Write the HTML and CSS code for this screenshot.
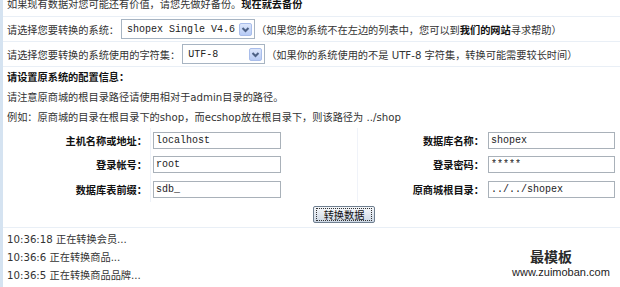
FILE: index.html
```html
<!DOCTYPE html>
<html lang="zh-CN">
<head>
    <meta charset="UTF-8">
    <meta name="viewport" content="width=device-width, initial-scale=1.0">
    <title>数据转换</title>
    <link rel="stylesheet" href="styles.css">
</head>
<body>

    <div class="page">
        <div class="row row-top">如果现有数据对您可能还有价值，请您先做好备份。<b>现在就去备份</b></div>

        <div class="row">
            <span>请选择您要转换的系统：</span>
            <span class="select select-system">
                <span class="select-value">shopex Single V4.6</span>
                <span class="select-btn"><svg width="11" height="11" viewBox="0 0 11 11"><path d="M2.5 4 L5.5 7 L8.5 4" fill="none" stroke="#4d6185" stroke-width="2"/></svg></span>
            </span>
            <span class="note">（如果您的系统不在左边的列表中，您可以到<b>我们的网站</b>寻求帮助）</span>
        </div>

        <div class="row">
            <span>请选择您要转换的系统使用的字符集：</span>
            <span class="select select-charset">
                <span class="select-value">UTF-8</span>
                <span class="select-btn"><svg width="11" height="11" viewBox="0 0 11 11"><path d="M2.5 4 L5.5 7 L8.5 4" fill="none" stroke="#4d6185" stroke-width="2"/></svg></span>
            </span>
            <span class="note">（如果你的系统使用的不是 UTF-8 字符集，转换可能需要较长时间）</span>
        </div>

        <div class="config">
            <div class="config-title">请设置原系统的配置信息：</div>
            <div class="config-text">请注意原商城的根目录路径请使用相对于admin目录的路径。</div>
            <div class="config-text">例如：原商城的目录在根目录下的shop，而ecshop放在根目录下，则该路径为 ../shop</div>

            <div class="config-grid">
                <div class="label col-1">主机名称或地址：</div>
                <div class="field col-2"><input type="text" class="input" value="localhost"></div>
                <div class="label col-3">数据库名称：</div>
                <div class="field"><input type="text" class="input input-right" value="shopex"></div>

                <div class="label col-1">登录帐号：</div>
                <div class="field col-2"><input type="text" class="input" value="root"></div>
                <div class="label col-3">登录密码：</div>
                <div class="field"><input type="text" class="input input-right" value="*****"></div>

                <div class="label col-1">数据库表前缀：</div>
                <div class="field col-2"><input type="text" class="input" value="sdb_"></div>
                <div class="label col-3">原商城根目录：</div>
                <div class="field"><input type="text" class="input input-right" value="../../shopex"></div>
            </div>

            <div class="actions">
                <button class="btn"><span class="btn-focus">转换数据</span></button>
            </div>
        </div>

        <div class="log">
            <div class="log-line">10:36:18 正在转换会员...</div>
            <div class="log-line">10:36:6 正在转换商品...</div>
            <div class="log-line">10:36:5 正在转换商品品牌...</div>

            <div class="watermark">
                <div class="watermark-name">最模板</div>
                <div class="watermark-url">www.zuimoban.com</div>
            </div>
        </div>
    </div>

</body>
</html>
```

FILE: styles.css
```css
body {
    margin: 0;
    background-color: #ffffff;
    font-family: "DejaVu Sans", "Noto Sans CJK SC", sans-serif;
    font-size: 10.2px;
    color: #333333;
}
.page {
    border-left: 3px solid #d5e3f1;
    min-height: 287px;
    box-sizing: border-box;
}
.row {
    display: flex;
    align-items: center;
    height: 24px;
    padding-left: 4px;
    border-bottom: 1px solid #e9eff6;
    white-space: nowrap;
}
.row-top {
    height: 16px;
    align-items: flex-start;
    line-height: 9px;
}
.row b {
    color: #111111;
}
.select {
    display: flex;
    align-items: center;
    justify-content: space-between;
    height: 20px;
    box-sizing: border-box;
    border: 1px solid #a7b4c2;
    background-color: #ffffff;
    margin-left: 2px;
    padding: 0 2px 0 5px;
}
.select-system {
    width: 134px;
}
.select-charset {
    width: 83px;
}
.select-value {
    font-family: "Liberation Mono", monospace;
    font-size: 10px;
    color: #222222;
}
.select-btn {
    display: flex;
    align-items: center;
    justify-content: center;
    width: 13px;
    height: 13px;
    box-sizing: border-box;
    border: 1px solid #a9bdea;
    border-radius: 2px;
    background: linear-gradient(#dce6fb, #b7cbf5);
}
.note {
    margin-left: 1px;
}
.config {
    padding: 1px 0 4px 0;
    border-bottom: 1px solid #e9eff6;
}
.config-title,
.config-text {
    line-height: 20px;
    padding-left: 4px;
    white-space: nowrap;
}
.config-title {
    font-weight: bold;
    color: #111111;
}
.config-grid {
    display: grid;
    grid-template-columns: 148px 207px 128px 1fr;
    grid-auto-rows: 24.5px;
}
.label {
    display: flex;
    align-items: center;
    justify-content: flex-end;
    padding-right: 2px;
    font-weight: bold;
    color: #111111;
    white-space: nowrap;
}
.col-1 {
    padding-right: 3px;
    border-right: 1px solid #eef2f8;
}
.col-2 {
    border-right: 1px solid #f0f3f9;
}
.field {
    display: flex;
    align-items: center;
    padding-left: 2px;
}
.input {
    width: 128px;
    height: 17px;
    box-sizing: border-box;
    border: 1px solid #a9b1b9;
    padding: 0 2px;
    font-family: "Liberation Mono", monospace;
    font-size: 10px;
    color: #222222;
    background-color: #ffffff;
}
.input-right {
    width: 127px;
}
.actions {
    padding-left: 310px;
    margin-top: 4.5px;
}
.btn {
    width: 62px;
    height: 17px;
    padding: 1px 2px;
    border: 1px solid #6f7f90;
    border-radius: 2px;
    background: linear-gradient(#f6f8fb, #ccd7e4);
    font-family: "Noto Sans CJK SC", sans-serif;
    font-size: 10.2px;
    color: #111111;
    display: flex;
}
.btn-focus {
    flex-grow: 1;
    border: 1px dotted #333333;
    line-height: 11px;
}
.log {
    position: relative;
    padding-top: 3px;
    padding-left: 4px;
}
.log-line {
    line-height: 18px;
}
.watermark {
    position: absolute;
    right: 10px;
    top: 21px;
    width: 98px;
}
.watermark-name {
    font-family: "Noto Sans CJK SC", serif;
    font-weight: bold;
    font-size: 14px;
    line-height: 15px;
    color: #2a2a2a;
    padding-left: 18px;
}
.watermark-url {
    font-family: "Liberation Sans", sans-serif;
    font-size: 11px;
    line-height: 11px;
    margin-top: 3px;
    color: #222222;
}
```
